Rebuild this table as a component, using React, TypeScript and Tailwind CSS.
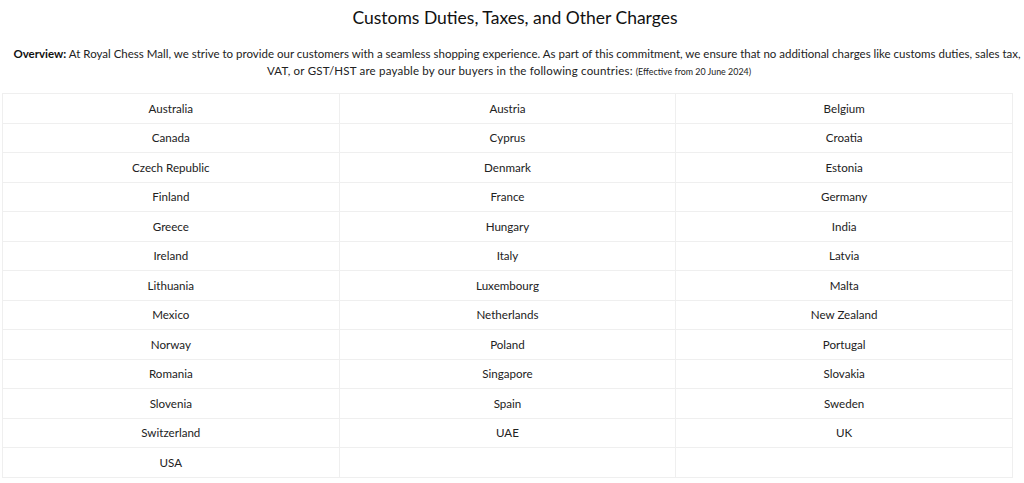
import React from 'react';

const countries = [
  'Australia', 'Austria', 'Belgium',
  'Canada', 'Cyprus', 'Croatia',
  'Czech Republic', 'Denmark', 'Estonia',
  'Finland', 'France', 'Germany',
  'Greece', 'Hungary', 'India',
  'Ireland', 'Italy', 'Latvia',
  'Lithuania', 'Luxembourg', 'Malta',
  'Mexico', 'Netherlands', 'New Zealand',
  'Norway', 'Poland', 'Portugal',
  'Romania', 'Singapore', 'Slovakia',
  'Slovenia', 'Spain', 'Sweden',
  'Switzerland', 'UAE', 'UK',
  'USA', '', '',
];

export default function App() {
  const rows: string[][] = [];
  for (let i = 0; i < countries.length; i += 3) rows.push(countries.slice(i, i + 3));

  return (
    <div className="w-[1024px] h-[483px] bg-white text-[#222] font-['Lato','Liberation_Sans',sans-serif] overflow-hidden">
      {/* Heading */}
      <h1 className="pt-[7px] pl-[6px] text-center text-[17.5px] leading-[22px] text-[#111]">
        Customs Duties, Taxes, and Other Charges
      </h1>

      {/* Overview */}
      <p className="mt-[16px] text-center text-[11.5px] leading-[17px] text-[#222]">
        <span className="block whitespace-nowrap pl-[10px]">
          <strong className="font-bold text-[#111]">Overview:</strong> At Royal Chess Mall, we strive to provide our customers with a seamless shopping experience. As part of this commitment, we ensure that no additional charges like customs duties, sales tax,
        </span>
        <span className="block pr-[6px]">
          <span className="tracking-[0.2px]">VAT, or GST/HST are payable by our buyers in the following countries:</span>{' '}
          <span className="text-[8.9px]">(Effective from 20 June 2024)</span>
        </span>
      </p>

      {/* Country table */}
      <table className="mt-[13px] ml-[2px] w-[1011px] border-collapse table-fixed">
        <tbody>
          {rows.map((row, r) => (
            <tr key={r}>
              {row.map((c, k) => (
                <td
                  key={k}
                  className="border border-[#efefef] h-[29.5px] p-0 text-center text-[11.6px] leading-[17px] text-[#222]"
                >
                  {c}
                </td>
              ))}
            </tr>
          ))}
        </tbody>
      </table>
    </div>
  );
}
